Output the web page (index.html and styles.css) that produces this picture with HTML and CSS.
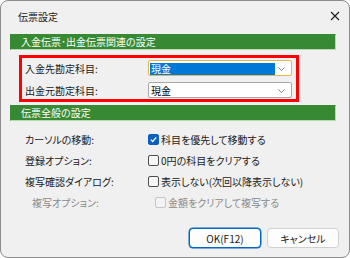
FILE: index.html
```html
<!DOCTYPE html>
<html lang="ja">
<head>
<meta charset="utf-8">
<link rel="stylesheet" href="styles.css">
</head>
<body>
<div class="dialog">
  <div class="titlebar">
    <span class="title">伝票設定</span>
    <svg class="close" width="10" height="10" viewBox="0 0 10 10"><path d="M1 1L9 9M9 1L1 9" stroke="#1a1a1a" stroke-width="1.1" fill="none"/></svg>
  </div>
  <div class="section-header">入金伝票･出金伝票関連の設定</div>
  <div class="red-box">
    <div class="field-row">
      <span class="field-label">入金先勘定科目:</span>
      <div class="select focused">
        <span class="select-value selected">現金</span>
        <svg class="chevron" width="7" height="4" viewBox="0 0 7 4"><path d="M0.5 0.5L3.5 3.5L6.5 0.5" stroke="#777" stroke-width="0.9" fill="none"/></svg>
      </div>
    </div>
    <div class="field-row">
      <span class="field-label">出金元勘定科目:</span>
      <div class="select">
        <span class="select-value">現金</span>
        <svg class="chevron" width="7" height="4" viewBox="0 0 7 4"><path d="M0.5 0.5L3.5 3.5L6.5 0.5" stroke="#777" stroke-width="0.9" fill="none"/></svg>
      </div>
    </div>
  </div>
  <div class="section-header second">伝票全般の設定</div>
  <div class="options">
    <div class="opt-row">
      <span class="opt-label">カーソルの移動:</span>
      <span class="check checked"><svg width="9" height="9" viewBox="0 0 9 9"><path d="M1.8 4.6L3.7 6.5L7.3 2.4" stroke="#fff" stroke-width="1.2" fill="none"/></svg></span>
      <span class="opt-text">科目を優先して移動する</span>
    </div>
    <div class="opt-row">
      <span class="opt-label">登録オプション:</span>
      <span class="check"></span>
      <span class="opt-text">0円の科目をクリアする</span>
    </div>
    <div class="opt-row">
      <span class="opt-label">複写確認ダイアログ:</span>
      <span class="check"></span>
      <span class="opt-text">表示しない(次回以降表示しない)</span>
    </div>
    <div class="opt-row disabled">
      <span class="opt-label">複写オプション:</span>
      <span class="check"></span>
      <span class="opt-text">金額をクリアして複写する</span>
    </div>
  </div>
  <div class="buttons">
    <button class="btn default">OK(F12)</button>
    <button class="btn">キャンセル</button>
  </div>
</div>
</body>
</html>
```
FILE: styles.css
```css
html, body {
  margin: 0;
  padding: 0;
  background: #ffffff;
}
body {
  font-family: "Noto Sans CJK JP", "Noto Sans", sans-serif;
  font-size: 10px;
  font-feature-settings: "palt";
  color: #1a1a1a;
}
.dialog {
  width: 350px;
  height: 258px;
  box-sizing: border-box;
  border: 1px solid #8c8c8c;
  border-radius: 8px;
  background: #f0f0f0;
  display: flex;
  flex-direction: column;
  overflow: hidden;
}
.titlebar {
  height: 30px;
  flex: none;
  display: flex;
  align-items: center;
  justify-content: space-between;
  padding: 0 9px 2px 17px;
}
.title {
  font-size: 10px;
  color: #1a1a1a;
}
.section-header {
  margin: 1px 13px 0 9px;
  height: 16px;
  box-sizing: border-box;
  background: #378a33;
  border: 1px solid #b6d9b0;
  border-left-color: #378a33;
  border-top-color: #378a33;
  color: #ffffff;
  padding-left: 10px;
  line-height: 14px;
  flex: none;
}
.section-header.second {
  margin-top: 3px;
}
.red-box {
  margin: 5px 50px 0 18px;
  border: 3px solid #ff0000;
  padding: 2px 4px 1px 3px;
  display: flex;
  flex-direction: column;
  gap: 6px;
  flex: none;
}
.field-row {
  display: flex;
  align-items: center;
  justify-content: space-between;
  height: 16px;
}
.field-label {
  color: #1a1a1a;
}
.select {
  width: 144px;
  height: 16px;
  box-sizing: border-box;
  border: 1px solid #a8a8a8;
  border-radius: 2px;
  background: #ffffff;
  display: flex;
  align-items: center;
  justify-content: space-between;
  padding: 1px 6px 0 1px;
}
.select.focused {
  border-color: #e8b64c;
}
.select-value {
  height: 12px;
  line-height: 12px;
  padding-left: 1px;
  color: #000;
}
.select-value.selected {
  background: #0078d7;
  color: #ffffff;
  width: 124px;
}
.chevron {
  display: block;
}
.options {
  margin: 8px 0 0 24px;
  display: flex;
  flex-direction: column;
  flex: none;
}
.opt-row {
  display: flex;
  align-items: center;
  height: 21px;
}
.opt-label {
  width: 123px;
}
.check {
  width: 11px;
  height: 11px;
  box-sizing: border-box;
  border: 1px solid #4d4d4d;
  border-radius: 2px;
  background: #f7f7f7;
  margin-right: 2px;
  display: flex;
  align-items: center;
  justify-content: center;
}
.check.checked {
  background: #0a5fbf;
  border-color: #0a5fbf;
}
.opt-row.disabled {
  color: #8a8a8a;
  padding-left: 7px;
}
.opt-row.disabled .check {
  border-color: #c6c6c6;
  background: #f3f3f3;
}
.buttons {
  margin-top: auto;
  margin-bottom: 9px;
  display: flex;
  justify-content: flex-end;
  gap: 6px;
  padding-right: 10px;
}
.btn {
  width: 72px;
  height: 20px;
  box-sizing: border-box;
  font-family: inherit;
  font-size: 10px;
  font-feature-settings: "palt";
  color: #1a1a1a;
  background: #fdfdfd;
  border: 1px solid #d0d0d0;
  border-radius: 4px;
  padding: 0;
}
.btn.default {
  border: 1px solid #0067c0;
  box-shadow: 0 0 0 0.5px #0067c0;
}
```
